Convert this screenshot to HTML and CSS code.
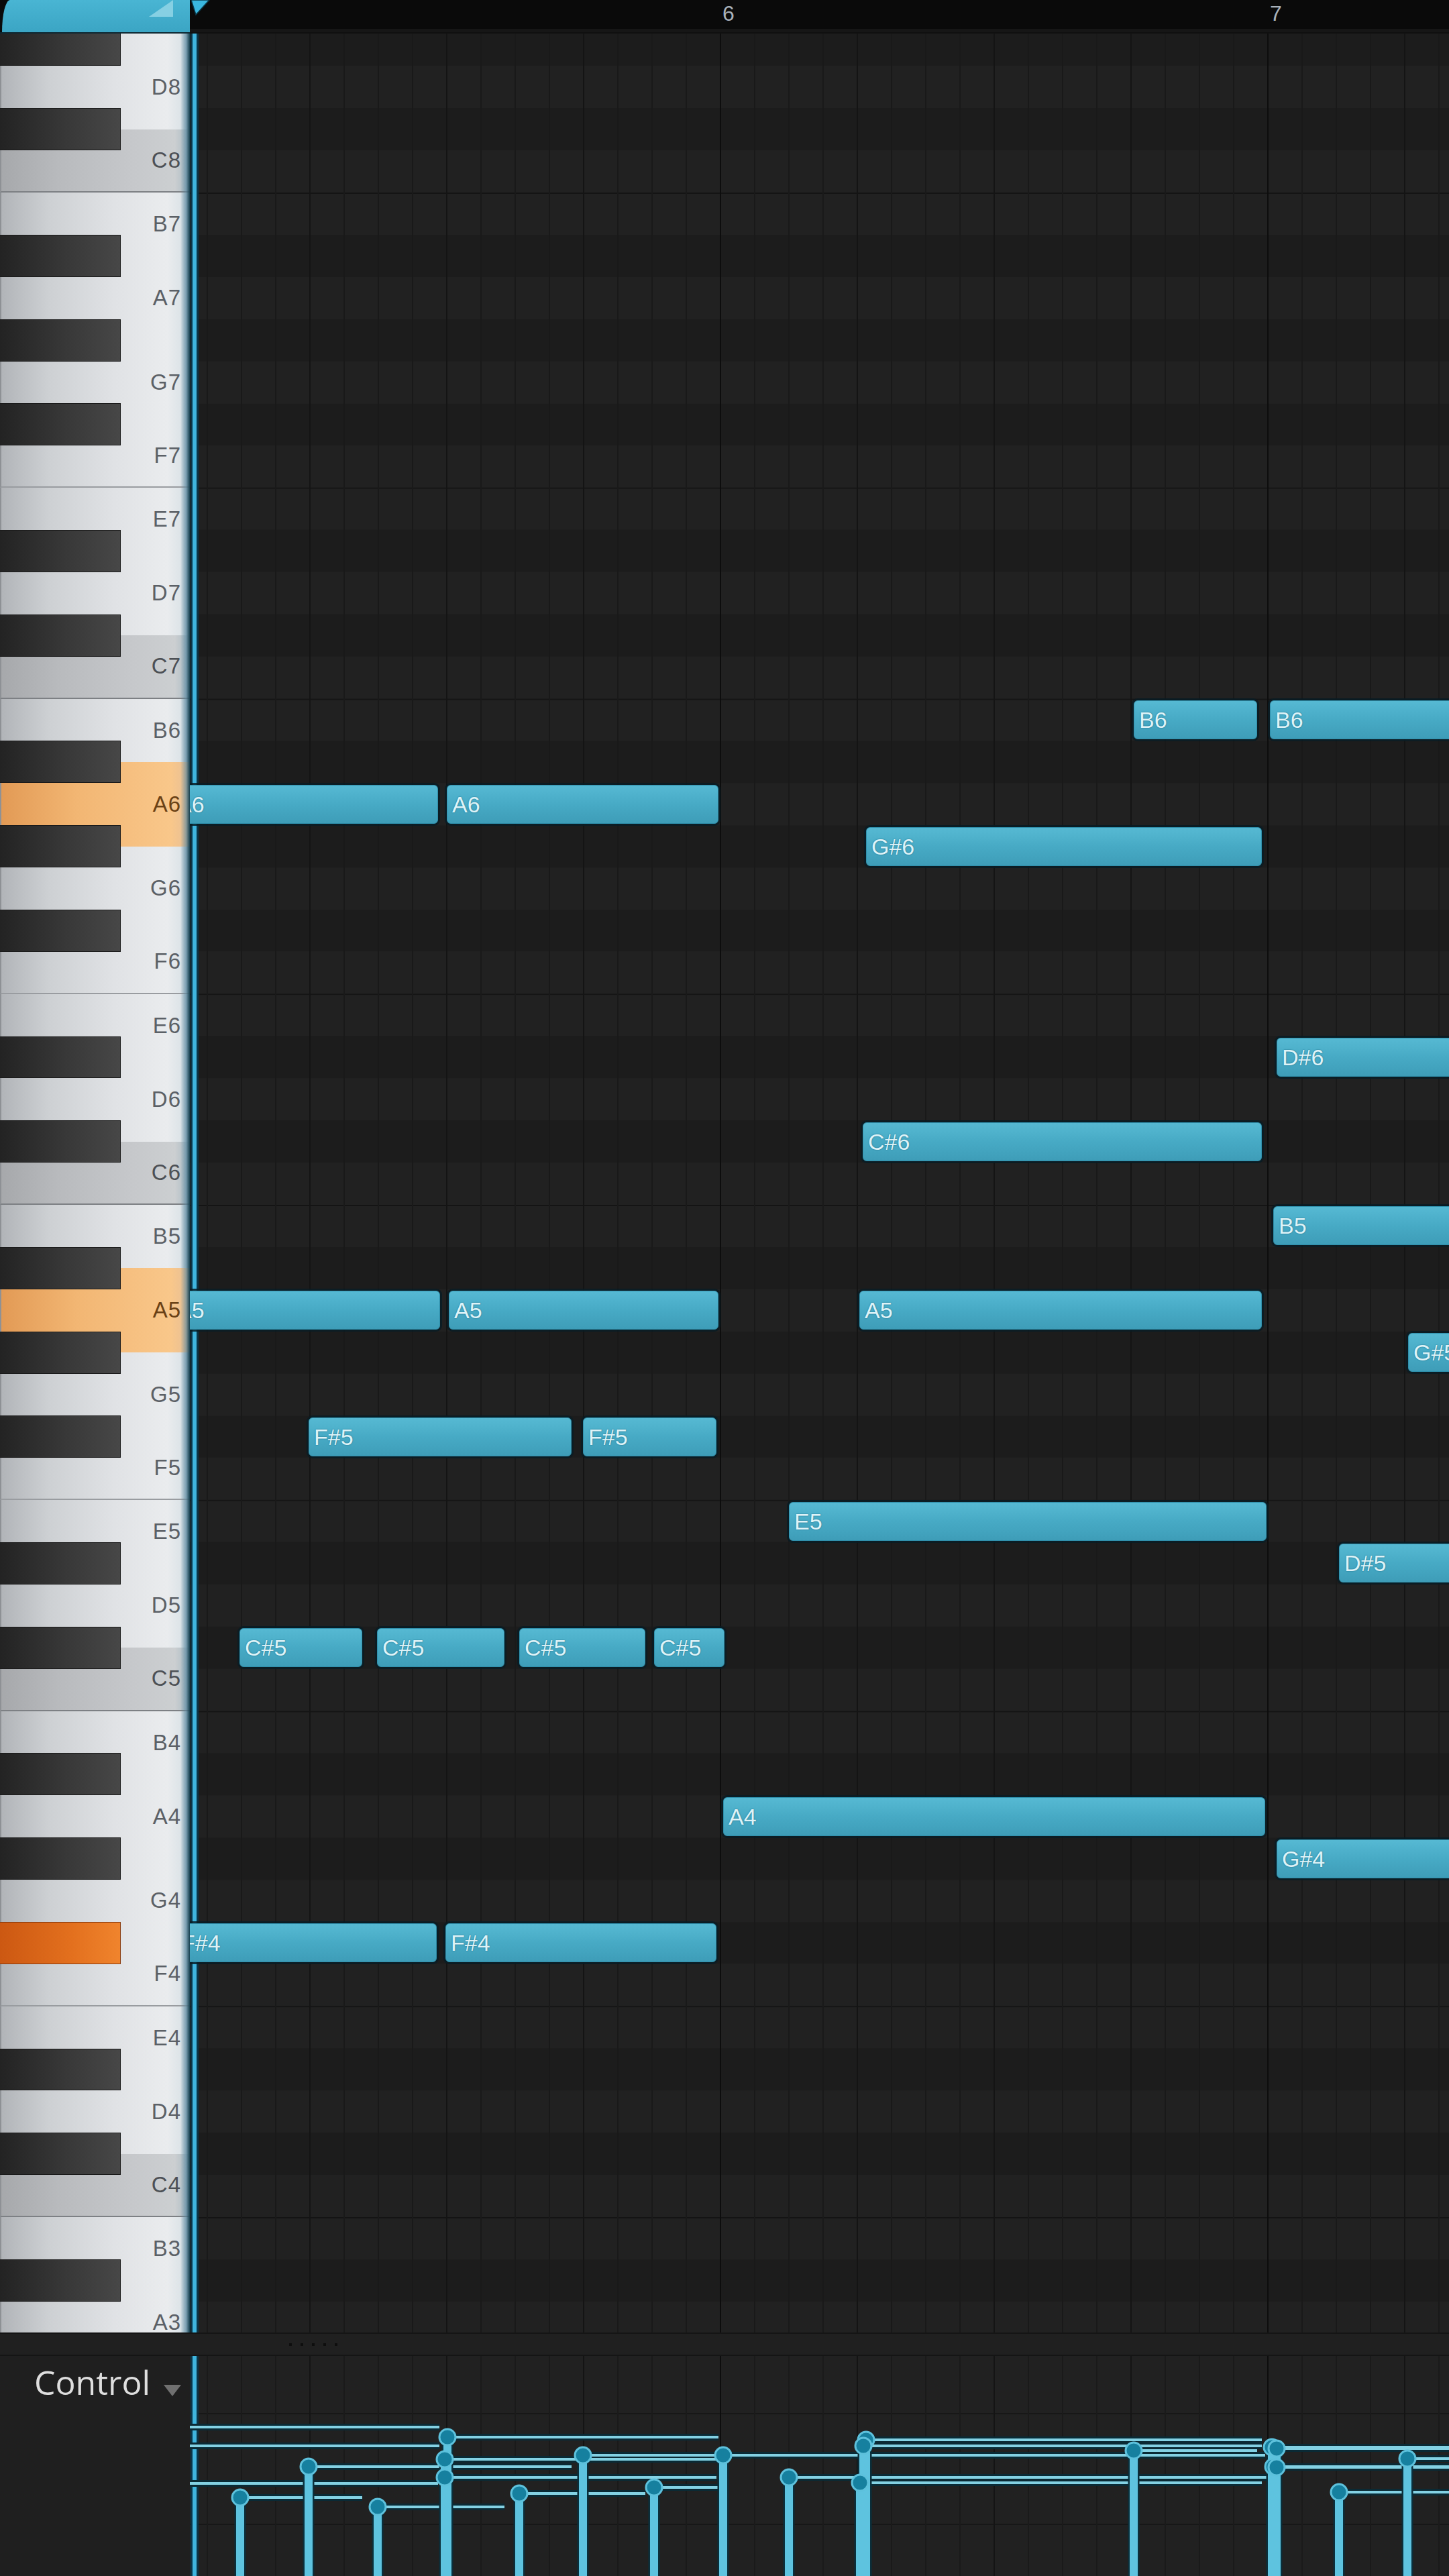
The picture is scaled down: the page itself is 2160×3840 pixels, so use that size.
FILE: index.html
```html
<!DOCTYPE html>
<html lang="en">
<head>
  <meta charset="UTF-8" />
  <title>Piano Roll</title>
  <link rel="stylesheet" href="styles.css">
</head>
<body>
<div class="app">

  <header class="ruler">
    <div class="ruler-corner">
      <div class="tab">
        <svg class="tab-flag" width="36" height="25" viewBox="0 0 36 25"><polygon points="0,25 36,0 36,25" fill="#86d0e3"/></svg>
      </div>
    </div>
    <div class="ruler-track">
      <span class="bar-num" style="left:794px">6</span>
      <span class="bar-num" style="left:1610px">7</span>
    </div>
    <svg class="now-mark" width="30" height="24" viewBox="0 0 30 24"><polygon points="1,0 28,0 8,22" fill="#3ab7df" stroke="#0b3848" stroke-width="1.5"/></svg>
  </header>

  <div class="editor">
    <div class="piano">
      <div class="keys">
        <!-- octave 8 (only its lower keys show) -->
        <div class="octave">
          <div class="white w15"></div><div class="white w2"></div><div class="white w2"></div><div class="white w15 f"></div><div class="white w15"></div><div class="white w2">D8</div><div class="white w15 c">C8</div>
          <div class="black as"></div><div class="black gs"></div><div class="black fs"></div><div class="black ds"></div><div class="black cs"></div>
        </div>
        <!-- octave 7 -->
        <div class="octave">
          <div class="white w15">B7</div><div class="white w2">A7</div><div class="white w2">G7</div><div class="white w15 f">F7</div><div class="white w15">E7</div><div class="white w2">D7</div><div class="white w15 c">C7</div>
          <div class="black as"></div><div class="black gs"></div><div class="black fs"></div><div class="black ds"></div><div class="black cs"></div>
        </div>
        <!-- octave 6 -->
        <div class="octave">
          <div class="white w15">B6</div><div class="white w2 hl">A6</div><div class="white w2">G6</div><div class="white w15 f">F6</div><div class="white w15">E6</div><div class="white w2">D6</div><div class="white w15 c">C6</div>
          <div class="black as"></div><div class="black gs"></div><div class="black fs"></div><div class="black ds"></div><div class="black cs"></div>
        </div>
        <!-- octave 5 -->
        <div class="octave">
          <div class="white w15">B5</div><div class="white w2 hl">A5</div><div class="white w2">G5</div><div class="white w15 f">F5</div><div class="white w15">E5</div><div class="white w2">D5</div><div class="white w15 c">C5</div>
          <div class="black as"></div><div class="black gs"></div><div class="black fs"></div><div class="black ds"></div><div class="black cs"></div>
        </div>
        <!-- octave 4 -->
        <div class="octave">
          <div class="white w15">B4</div><div class="white w2">A4</div><div class="white w2">G4</div><div class="white w15 f">F4</div><div class="white w15">E4</div><div class="white w2">D4</div><div class="white w15 c">C4</div>
          <div class="black as"></div><div class="black gs"></div><div class="black fs hl"></div><div class="black ds"></div><div class="black cs"></div>
        </div>
        <!-- octave 3 (only B3 and the top of A3 show) -->
        <div class="octave">
          <div class="white w15">B3</div><div class="white w2">A3</div><div class="white w2"></div><div class="white w15 f"></div><div class="white w15"></div><div class="white w2"></div><div class="white w15 c"></div>
          <div class="black as"></div><div class="black gs"></div><div class="black fs"></div><div class="black ds"></div><div class="black cs"></div>
        </div>
      </div>
    </div>

    <div class="roll">
      <div class="note" style="left:1407px;top:994px;width:184px">B6</div>
      <div class="note" style="left:1610px;top:994px;width:300px">B6</div>
      <div class="note" style="left:-28px;top:1120px;width:398px">A6</div>
      <div class="note" style="left:383px;top:1120px;width:405px">A6</div>
      <div class="note" style="left:1008px;top:1183px;width:590px">G#6</div>
      <div class="note" style="left:1620px;top:1497px;width:300px">D#6</div>
      <div class="note" style="left:1003px;top:1623px;width:595px">C#6</div>
      <div class="note" style="left:1615px;top:1748px;width:300px">B5</div>
      <div class="note" style="left:-28px;top:1874px;width:401px">A5</div>
      <div class="note" style="left:386px;top:1874px;width:402px">A5</div>
      <div class="note" style="left:998px;top:1874px;width:600px">A5</div>
      <div class="note" style="left:1816px;top:1937px;width:200px">G#5</div>
      <div class="note" style="left:177px;top:2063px;width:392px">F#5</div>
      <div class="note" style="left:586px;top:2063px;width:199px">F#5</div>
      <div class="note" style="left:893px;top:2189px;width:712px">E5</div>
      <div class="note" style="left:1713px;top:2251px;width:200px">D#5</div>
      <div class="note" style="left:74px;top:2377px;width:183px">C#5</div>
      <div class="note" style="left:279px;top:2377px;width:190px">C#5</div>
      <div class="note" style="left:491px;top:2377px;width:188px">C#5</div>
      <div class="note" style="left:692px;top:2377px;width:105px">C#5</div>
      <div class="note" style="left:795px;top:2629px;width:808px">A4</div>
      <div class="note" style="left:1620px;top:2692px;width:300px">G#4</div>
      <div class="note" style="left:-21px;top:2817px;width:389px">F#4</div>
      <div class="note" style="left:381px;top:2817px;width:404px">F#4</div>
    </div>
  </div>

  <div class="splitter">
    <span class="grip"></span><span class="grip"></span><span class="grip"></span><span class="grip"></span><span class="grip"></span>
  </div>

  <div class="lanes">
    <div class="lane-head">
      <span class="lane-title">Control</span>
      <span class="caret"></span>
    </div>
    <div class="lane">
      <svg class="vel" width="1877" height="328" viewBox="0 0 1877 328">
        <defs>
          <path id="lens" d="M0 106H372M0 134H372M0 190H370M75 211H257M177 165H569M280 225H469M384 121H788M380 154H788M380 181H785M491 205H679M586 148H785M692 196H797M795 148H1603M893 181H1605M1008 125H1598M1004 134H1598M999 189H1598M1407 141H1591M1613 136H1877M1620 138H1877M1615 165H1877M1620 166H1877M1713 203H1877M1815 153H1877"/>
          <path id="stems" d="M75 211V328M177 165V328M280 225V328M384 121V328M380 154V328M380 181V328M491 205V328M586 148V328M692 196V328M795 148V328M893 181V328M1008 125V328M1004 134V328M999 189V328M1407 141V328M1613 136V328M1620 138V328M1615 165V328M1620 166V328M1713 203V328M1815 153V328"/>
        </defs>
        <use href="#lens" fill="none" stroke="#0a2a35" stroke-width="10"/>
        <use href="#lens" fill="none" stroke="#83d1e3" stroke-width="4"/>
        <use href="#stems" fill="none" stroke="#0b2f3b" stroke-width="17"/>
        <use href="#stems" fill="none" stroke="#5ec3df" stroke-width="12"/>
        <g fill="#16809f" stroke="#5dc1dc" stroke-width="3">
          <circle cx="75" cy="211" r="12"/>
          <circle cx="177" cy="165" r="12"/>
          <circle cx="280" cy="225" r="12"/>
          <circle cx="384" cy="121" r="12"/>
          <circle cx="380" cy="154" r="12"/>
          <circle cx="380" cy="181" r="12"/>
          <circle cx="491" cy="205" r="12"/>
          <circle cx="586" cy="148" r="12"/>
          <circle cx="692" cy="196" r="12"/>
          <circle cx="795" cy="148" r="12"/>
          <circle cx="893" cy="181" r="12"/>
          <circle cx="1008" cy="125" r="12"/>
          <circle cx="1004" cy="134" r="12"/>
          <circle cx="999" cy="189" r="12"/>
          <circle cx="1407" cy="141" r="12"/>
          <circle cx="1613" cy="136" r="12"/>
          <circle cx="1620" cy="138" r="12"/>
          <circle cx="1615" cy="165" r="12"/>
          <circle cx="1620" cy="166" r="12"/>
          <circle cx="1713" cy="203" r="12"/>
          <circle cx="1815" cy="153" r="12"/>
        </g>
      </svg>
    </div>
  </div>

</div>
</body>
</html>
```

FILE: styles.css
```css
body {
  margin: 0;
  background: #1f1f1f;
  font-family: "Liberation Sans", Arial, sans-serif;
  overflow: hidden;
}

.app {
  width: 2160px;
  height: 3840px;
  display: flex;
  flex-direction: column;
}

/* ruler */

.ruler {
  height: 50px;
  flex-shrink: 0;
  display: flex;
  position: relative;
  background: #0a0a0a;
}

.ruler-corner {
  width: 283px;
  flex-shrink: 0;
  background: linear-gradient(to bottom, #0a0a0a 0 48px, #0e2731 48px);
}

.tab {
  position: relative;
  height: 48px;
  margin-left: 3px;
  background: linear-gradient(to bottom, #49b5d3, #3ba5c4);
  border-top-left-radius: 12px 48px;
}

.tab-flag {
  position: absolute;
  top: 0;
  right: 25px;
}

.ruler-track {
  flex: 1;
  position: relative;
  background: linear-gradient(to bottom, #0a0a0a 0 43px, #161616 43px 48px, #101010 48px);
}

.bar-num {
  position: absolute;
  top: 0;
  font-size: 32px;
  line-height: 40px;
  color: #a9b2ba;
}

.now-mark {
  position: absolute;
  left: 284px;
  top: 0;
}

/* piano + grid */

.editor {
  height: 3427px;
  flex-shrink: 0;
  display: flex;
}

.piano {
  width: 283px;
  flex-shrink: 0;
  position: relative;
  overflow: hidden;
  background: #0e2f3c;
}

.piano::after {
  content: "";
  position: absolute;
  top: 0;
  right: 0;
  bottom: 0;
  width: 14px;
  background: linear-gradient(to right, rgba(170, 200, 215, 0), rgba(80, 130, 155, 0.6) 60%, #17404f);
}

.keys {
  margin-top: -517.5px;
}

.octave {
  height: 754.5px;
  position: relative;
  display: flex;
  flex-direction: column;
}

.white {
  box-sizing: border-box;
  display: flex;
  align-items: center;
  justify-content: flex-end;
  padding-right: 13px;
  font-size: 33px;
  letter-spacing: 1px;
  color: #5b6066;
  background: linear-gradient(to right, #b1b4b8 0, #cdd0d3 25%, #e0e2e5 60%, #eaecee 88%, #dde4e8 95%, #a8bdc8 100%);
  border-left: 2px solid #8e9195;
}

.w15 { height: 94.3125px; }
.w2 { height: 125.75px; }

.white.c {
  color: #4c5055;
  background: linear-gradient(to right, #a6a8ab 0, #b8babd 30%, #c6c8cb 70%, #cccfd1 92%, #a5b8c2 100%);
  border-bottom: 2px solid #7d8084;
}

.white.f {
  border-bottom: 2px solid #999ca0;
}

.white.hl {
  color: #6a4115;
  background: linear-gradient(to right, #e29a55 0, #f2b673 40%, #f9c78a 90%, #e5bf98 100%);
}

.black {
  position: absolute;
  left: 0;
  width: 180px;
  height: 62.875px;
  box-sizing: border-box;
  background: linear-gradient(to right, #232323, #383838 55%, #474747);
  border: 1px solid #1a1a1a;
  border-left: none;
}

.black.hl {
  background: linear-gradient(to right, #cc5812, #e3701e 60%, #f0842d);
  border-color: #8a3a0c;
}

.as { top: 62.875px; }
.gs { top: 188.625px; }
.fs { top: 314.375px; }
.ds { top: 503px; }
.cs { top: 628.75px; }

.roll {
  flex: 1;
  position: relative;
  overflow: hidden;
  background-color: #212121;
  background-image:
    linear-gradient(to right, #0d0d0d 0 2px, transparent 2px),
    linear-gradient(to right, #141414 0 2px, transparent 2px),
    linear-gradient(to right, #191919 0 2px, transparent 2px),
    linear-gradient(to bottom,
      #141414 0 2px, #212121 2px 62.875px,
      #1c1c1c 62.875px 125.75px,
      #212121 125.75px 188.625px,
      #1c1c1c 188.625px 251.5px,
      #212121 251.5px 314.375px,
      #1c1c1c 314.375px 377.25px,
      #212121 377.25px 440.125px,
      #151515 440.125px 442px, #212121 442px 503px,
      #1c1c1c 503px 565.875px,
      #212121 565.875px 628.75px,
      #1c1c1c 628.75px 691.625px,
      #212121 691.625px 754.5px);
  background-size: 816px 100%, 204px 100%, 51px 100%, 100% 754.5px;
  background-position: 790px 0, 178px 0, 25px 0, 0 237px;
}

.roll::before,
.lane::before {
  content: "";
  position: absolute;
  left: 1px;
  top: 0;
  bottom: 0;
  width: 6px;
  background: #3fb5de;
  border-left: 3px solid #0c3547;
  border-right: 3px solid #0c3547;
}

.note {
  position: absolute;
  z-index: 1;
  height: 58px;
  box-sizing: border-box;
  padding-left: 7px;
  border: 1px solid #2f8fab;
  border-radius: 6px;
  background: linear-gradient(to bottom, #56b9d3, #47aac5 50%, #3e9db8);
  box-shadow: 0 0 0 3px rgba(8, 28, 37, 0.85);
  color: #def3f8;
  font-size: 34px;
  line-height: 56px;
  white-space: nowrap;
  overflow: hidden;
  text-shadow: 0 0 2px #1c6a82;
}

/* splitter */

.splitter {
  height: 35px;
  flex-shrink: 0;
  box-sizing: border-box;
  display: flex;
  align-items: center;
  gap: 13px;
  padding-left: 431px;
  background: #202020;
  border-top: 2px solid #151515;
  border-bottom: 2px solid #151515;
}

.grip {
  width: 4px;
  height: 4px;
  background: #0e0e0e;
}

/* control lane */

.lanes {
  height: 328px;
  flex-shrink: 0;
  display: flex;
}

.lane-head {
  width: 283px;
  flex-shrink: 0;
  box-sizing: border-box;
  display: flex;
  align-items: flex-start;
  gap: 20px;
  padding: 14px 0 0 51px;
  background: #1f1f1f;
}

.lane-title {
  font-family: "Open Sans", "Noto Sans", sans-serif;
  font-size: 50px;
  line-height: 50px;
  color: #dedede;
}

.caret {
  margin-top: 29px;
  border-top: 17px solid #707070;
  border-left: 13px solid transparent;
  border-right: 13px solid transparent;
}

.lane {
  flex: 1;
  position: relative;
  background-color: #212121;
  background-image:
    linear-gradient(to right, #0d0d0d 0 2px, transparent 2px),
    linear-gradient(to right, #141414 0 2px, transparent 2px),
    linear-gradient(to right, #1a1a1a 0 2px, transparent 2px),
    linear-gradient(to bottom, transparent 0 85px, #171717 85px 87px, transparent 87px 250px, #171717 250px 252px, transparent 252px);
  background-size: 816px 100%, 204px 100%, 51px 100%, 100% 100%;
  background-position: 790px 0, 178px 0, 25px 0, 0 0;
}

.vel {
  display: block;
  position: relative;
  z-index: 1;
}
```
